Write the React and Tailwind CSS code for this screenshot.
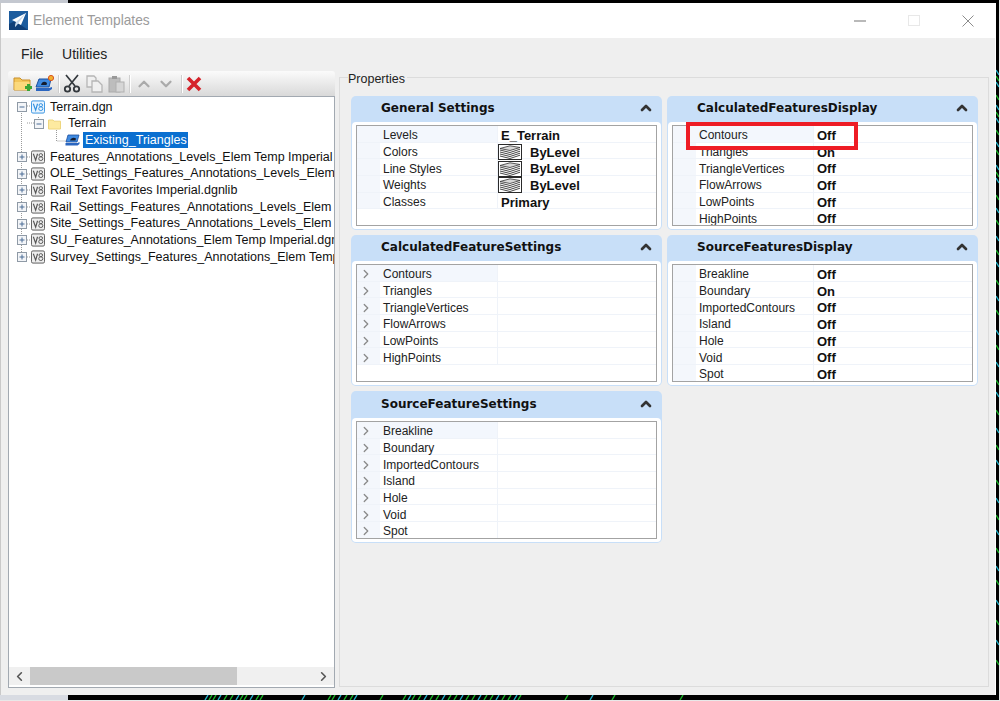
import React from 'react';
import { ChevronUp, ChevronDown, ChevronRight, ChevronLeft } from 'lucide-react';

// names as far as the pane shows them before it clips
const treeFiles = [
  'Features_Annotations_Levels_Elem Temp Imperial',
  'OLE_Settings_Features_Annotations_Levels_Elem',
  'Rail Text Favorites Imperial.dgnlib',
  'Rail_Settings_Features_Annotations_Levels_Elem T',
  'Site_Settings_Features_Annotations_Levels_Elem T',
  'SU_Features_Annotations_Elem Temp Imperial.dgnl',
  'Survey_Settings_Features_Annotations_Elem Temp',
];

const general = [
  { label: 'Levels', value: 'E_Terrain' },
  { label: 'Colors', value: 'ByLevel', swatch: true },
  { label: 'Line Styles', value: 'ByLevel', swatch: true },
  { label: 'Weights', value: 'ByLevel', swatch: true },
  { label: 'Classes', value: 'Primary' },
];
const calcDisplay = [
  { label: 'Contours', value: 'Off' },
  { label: 'Triangles', value: 'On' },
  { label: 'TriangleVertices', value: 'Off' },
  { label: 'FlowArrows', value: 'Off' },
  { label: 'LowPoints', value: 'Off' },
  { label: 'HighPoints', value: 'Off' },
];
const calcSettings = ['Contours', 'Triangles', 'TriangleVertices', 'FlowArrows', 'LowPoints', 'HighPoints'].map((label) => ({ label, arrow: true }));
const sourceDisplay = [
  { label: 'Breakline', value: 'Off' },
  { label: 'Boundary', value: 'On' },
  { label: 'ImportedContours', value: 'Off' },
  { label: 'Island', value: 'Off' },
  { label: 'Hole', value: 'Off' },
  { label: 'Void', value: 'Off' },
  { label: 'Spot', value: 'Off' },
];
const sourceSettings = ['Breakline', 'Boundary', 'ImportedContours', 'Island', 'Hole', 'Void', 'Spot'].map((label) => ({ label, arrow: true }));

function AppLogo() {
  return (
    <svg width="19" height="19" viewBox="0 0 19 19" className="shrink-0">
      <rect width="19" height="19" fill="#1c5c9e" />
      <path d="M0 19 L0 13 L6 10 L19 19Z" fill="#0f3f78" />
      <path d="M17 2 L3 9 L7 11 L6 16 L9 12.5 L12 14Z" fill="#fff" />
      <path d="M17 2 L7 11 L6 16 L9 12.5Z" fill="#c5d9ee" />
    </svg>
  );
}

function ExpandBox({ open }) {
  return (
    <svg width="10" height="10" viewBox="0 0 10 10" className="shrink-0 relative">
      <rect x="0.5" y="0.5" width="9" height="9" fill="#f3f5f8" stroke="#8f9aa6" />
      <path d={open ? 'M2.5 5H7.5' : 'M2.5 5H7.5M5 2.5V7.5'} stroke="#4a6d96" fill="none" />
    </svg>
  );
}

function V8Icon({ blue }) {
  const c = blue ? '#2f8fe0' : '#555';
  return (
    <svg width="14" height="14" viewBox="0 0 15 14" className="shrink-0 relative">
      <rect x="0.5" y="0.5" width="14" height="13" rx="1.5" fill={blue ? '#e8f4fe' : '#eee'} stroke={c} />
      <path d="M2.5 3.5 L5 10.5 L7 3.5" fill="none" stroke={c} strokeWidth="1.2" />
      <ellipse cx="10.5" cy="5" rx="1.9" ry="1.6" fill="none" stroke={c} />
      <ellipse cx="10.5" cy="8.8" rx="2.2" ry="2" fill="none" stroke={c} />
    </svg>
  );
}

function FolderSmall() {
  return (
    <svg width="13" height="12" viewBox="0 0 13 12" className="shrink-0">
      <path d="M0.5 2 H5 L6 3.2 H12.5 V11 H0.5Z" fill="#fdeaa0" stroke="#eed67e" />
    </svg>
  );
}

function SurfaceIcon() {
  return (
    <svg width="15" height="12" viewBox="0 0 15 12" className="shrink-0 relative">
      <path d="M3 1 H14 L12 8 H1Z" fill="#3f8ae0" stroke="#1d4f9e" strokeWidth="0.8" />
      <path d="M5 6.5 C6 3.5 9 3 11 4.5 L10.5 6.5Z" fill="#141c2e" />
      <path d="M0.5 9 H12.5 L14.5 8 V10 L12.5 11.5 H0.5Z" fill="#2b66c0" />
    </svg>
  );
}

function LevelSwatch() {
  return (
    <svg width="24" height="16" viewBox="0 0 24 16" className="shrink-0">
      <rect x="0.5" y="0.5" width="23" height="15" fill="#fff" stroke="#2a2a2a" />
      <path d="M2 4.5 L12 1.8 L22 3.5 L12 6.5Z" fill="#d8d8d8" stroke="#333" strokeWidth="0.8" />
      <path d="M2 6 L12 8.5 L22 5.2M2 8 L12 10.5 L22 7.2M2 10 L12 12.5 L22 9.2M2 12 L12 14.5 L22 11.2" fill="none" stroke="#333" strokeWidth="0.9" />
    </svg>
  );
}

function ToolbarSep({ className }) {
  return <span className={`h-[18px] w-[2px] bg-[#cfcfcf] border-r border-white ${className}`} />;
}

function ToolbarIcons() {
  return (
    <div className="flex items-center h-full pl-[5px]">
      <svg width="20" height="18" viewBox="0 0 20 18" className="shrink-0">
        <path d="M1 3 H7 L9 5 H17 V15 H1Z" fill="#f3c65a" stroke="#c98f2a" />
        <rect x="1.5" y="7" width="15" height="8" fill="#fbd97c" />
        <path d="M12 12.5 H19M15.5 9 V16" stroke="#3aa535" strokeWidth="3" />
      </svg>
      <div className="ml-[2px]">
        <svg width="20" height="17" viewBox="0 0 20 17" className="shrink-0">
          <path d="M4 4 H16 L14 12 H1Z" fill="#3f8ae0" stroke="#1d4f9e" />
          <path d="M6 10 C7 6 10 6 12 8 L11.5 10Z" fill="#141c2e" />
          <path d="M1 13 H14 L17 12 V14 L14 16 H1Z" fill="#2b66c0" />
          <circle cx="16" cy="3" r="2.6" fill="#f0b030" stroke="#d9541e" />
        </svg>
      </div>
      <ToolbarSep className="ml-[3px]" />
      <svg width="18" height="19" viewBox="0 0 18 19" className="shrink-0 ml-[3px]" fill="none" stroke="#33383d">
        <path d="M3 1 L12 12M15 1 L6 12" strokeWidth="1.7" />
        <circle cx="4.5" cy="15" r="2.7" strokeWidth="1.8" />
        <circle cx="13.5" cy="15" r="2.7" strokeWidth="1.8" />
      </svg>
      <svg width="17" height="18" viewBox="0 0 17 18" className="shrink-0 ml-[5px]" fill="#f0f0f0" stroke="#b5b5b5" strokeWidth="1.3">
        <path d="M1 1 H8 L10 3 V12 H1Z" />
        <path d="M6 6 H12 L16 10 V17 H6Z" />
      </svg>
      <svg width="17" height="18" viewBox="0 0 17 18" className="shrink-0 ml-[5px]">
        <rect x="1" y="3" width="11" height="14" fill="#bdbdbd" stroke="#aaa" />
        <rect x="4" y="1" width="5" height="3" fill="#999" />
        <rect x="8" y="7" width="8" height="10" fill="#d6d6d6" stroke="#b0b0b0" />
      </svg>
      <ToolbarSep className="ml-[4px]" />
      <ChevronUp size={18} strokeWidth={3} className="text-[#aaa] ml-[4px] shrink-0" />
      <ChevronDown size={18} strokeWidth={3} className="text-[#aaa] ml-[4px] shrink-0" />
      <ToolbarSep className="ml-[6px]" />
      <svg width="16" height="16" viewBox="0 0 16 16" className="shrink-0 ml-[3px]">
        <path d="M2 2 L14 14M14 2 L2 14" stroke="#d5222a" strokeWidth="3.6" />
      </svg>
    </div>
  );
}

function TreeRow({ className = '', children }) {
  return <div className={`relative flex items-center h-[16.7px] whitespace-nowrap ${className}`}>{children}</div>;
}

function Tree() {
  return (
    <div className="relative flex-1 overflow-hidden pt-[1.5px] text-[12.5px] leading-none text-[#111] font-['Liberation_Sans',sans-serif]">
      {/* dotted connector lines */}
      <svg width="90" height="180" className="absolute left-0 top-0" fill="none" stroke="#9a9a9a" strokeDasharray="1 1">
        <path d="M12.5 10 V162" />
        <path d="M29.5 20 V26" />
        <path d="M47.5 33 V44 H58" />
        <path d="M18 26 H28" />
        <path d="M18 9 H24" />
        <path d="M18 60 H24M18 77 H24M18 93 H24M18 110 H24M18 127 H24M18 143 H24M18 160 H24" />
      </svg>
      <TreeRow className="pl-[8px]">
        <ExpandBox open />
        <span className="ml-[4px]"><V8Icon blue /></span>
        <span className="ml-[5px]">Terrain.dgn</span>
      </TreeRow>
      <TreeRow className="pl-[25px]">
        <ExpandBox open />
        <span className="ml-[4px] relative"><FolderSmall /></span>
        <span className="ml-[7px]">Terrain</span>
      </TreeRow>
      <TreeRow className="pl-[56px]">
        <SurfaceIcon />
        <span className="ml-[3px] h-[16px] w-[105px] pl-[2px] flex items-center bg-[#0a6fd0] text-white">Existing_Triangles</span>
      </TreeRow>
      {treeFiles.map((name) => (
        <TreeRow key={name} className="pl-[8px]">
          <ExpandBox />
          <span className="ml-[4px]"><V8Icon /></span>
          <span className="ml-[5px]">{name}</span>
        </TreeRow>
      ))}
    </div>
  );
}

function PropRow({ row, first }) {
  return (
    <div className="flex h-[16.7px] border-b border-[#eff3f9] text-[12px] leading-none font-['Liberation_Sans',sans-serif]">
      <div className="w-[23px] shrink-0 bg-[#f4f7fc] flex items-center pt-[3px] pl-[2px]">
        {row.arrow && <ChevronRight size={14} strokeWidth={2.2} className="text-[#8a8a8a]" />}
      </div>
      <div className={`w-[117px] shrink-0 pl-[3px] pt-[3px] flex items-center text-[#222] ${first ? 'bg-[#f3f7fd]' : 'bg-white'}`}>
        {row.label}
      </div>
      <div className="flex-1 border-l border-[#eff3f9] flex items-center pl-[3px] pt-[3px] text-[13px] font-bold text-[#111]">
        {row.swatch ? (
          <>
            <span className="-ml-[3px]"><LevelSwatch /></span>
            <span className="ml-[8px]">{row.value}</span>
          </>
        ) : (
          row.value
        )}
      </div>
    </div>
  );
}

function Panel({ title, rows, boxHeight, headerHeight = 'h-[25px]' }) {
  return (
    <section className="rounded-[5px] bg-[#c8dff8] p-[1px]">
      <header className={`flex items-center justify-between pb-[3px] pl-[29px] pr-[7px] ${headerHeight}`}>
        <h3 className="text-[12px] font-bold text-[#111] font-['DejaVu_Sans',sans-serif]">{title}</h3>
        <ChevronUp size={16} strokeWidth={4} className="text-[#333]" />
      </header>
      <div className="rounded-[4px] bg-white px-[4px] py-[3px]">
        <div className={`border border-[#a3a3a3] overflow-hidden ${boxHeight}`}>
          {rows.map((row, i) => (
            <PropRow key={row.label} row={row} first={i === 0 && title !== 'SourceFeaturesDisplay'} />
          ))}
        </div>
      </div>
    </section>
  );
}

function Backdrop() {
  // desktop drawing peeking out behind the window
  const bottom = [205, 209, 213, 218, 224, 230, 236, 240, 244, 250, 256, 260, 302, 328, 332, 338, 344, 350, 354, 380, 403, 408, 412, 418, 424, 430, 436, 442, 448, 454, 460, 466, 472, 478, 484, 490, 496, 502, 508, 514, 518, 565, 590, 612, 680];
  const side = [70, 76, 82, 95, 105, 112, 118, 130, 142, 150, 165, 172, 178, 195, 208, 220, 236, 250, 262, 280, 296, 310, 330, 345, 362, 380, 392, 410, 428, 445, 460, 480, 498, 515, 530, 548, 566, 580, 600, 620, 640, 660];
  return (
    <svg width="1000" height="701" className="absolute inset-0" fill="none" strokeWidth="1.4">
      {bottom.map((x, i) => (
        <path key={x} d={`M${x} 700 L${x + 3} 695`} stroke={i % 3 === 0 ? '#22b5cc' : '#18b828'} />
      ))}
      {side.map((y, i) => (
        <path key={y} d={`M996 ${y} L999 ${y + 5}`} stroke={i % 2 === 0 ? '#22b5cc' : '#18b828'} />
      ))}
    </svg>
  );
}

export default function App() {
  return (
    <div className="relative w-[1000px] h-[701px] overflow-hidden bg-black font-['Liberation_Sans',sans-serif]">
      <Backdrop />
      <div className="absolute left-0 top-0 w-[68px] h-[3px] bg-[#c4c8d0]" />
      <div className="absolute left-0 bottom-0 w-[68px] h-[6px] bg-[#d8dbe2]" />
      <div className="absolute left-[999px] top-0 w-[1px] h-[701px] bg-[#e8e8e8]" />
      <div className="absolute left-0 top-[700px] w-[1000px] h-[1px] bg-[#e8e8e8]" />

      {/* window */}
      <div className="absolute left-0 top-[3px] w-[996px] h-[692px] flex flex-col bg-white border-l border-[#c9c9c9] border-r border-r-white">
        <div className="flex items-center h-[35px] pl-[8px] shrink-0">
          <AppLogo />
          <span className="ml-[5px] pt-[2px] text-[13.75px] text-[#9b9b9b]">Element Templates</span>
          <div className="ml-auto flex items-center">
            <span className="w-[12px] h-[2px] bg-[#b9b9b9]" />
            <span className="ml-[42px] w-[12px] h-[11px] border border-[#e8e8e8]" />
            <svg width="12" height="12" viewBox="0 0 12 12" className="ml-[42px] mr-[21px]">
              <path d="M0.5 0.5 L11.5 11.5M11.5 0.5 L0.5 11.5" stroke="#8c8c8c" />
            </svg>
          </div>
        </div>

        <div className="flex-1 flex flex-col bg-[#efefef]">
          <div className="flex items-center h-[33px] pl-[20px] gap-[18.5px] text-[14px] text-[#222] shrink-0">
            <span>File</span>
            <span>Utilities</span>
          </div>

          <div className="flex pl-[7px] pr-[6px] gap-[4px] h-[617px]">
            {/* left pane */}
            <div className="w-[327px] shrink-0 flex flex-col">
              <div className="h-[25px] shrink-0 rounded-t-[3px] bg-gradient-to-b from-[#fbfbfb] to-[#d9d9d9]">
                <ToolbarIcons />
              </div>
              <div className="flex-1 flex flex-col border border-[#a2a9b1] bg-white">
                <Tree />
                <div className="flex items-center h-[18px] shrink-0 bg-[#f0f0f0] mb-[2px]">
                  <div className="w-[21px] flex justify-center">
                    <ChevronLeft size={15} strokeWidth={2.6} className="text-[#555]" />
                  </div>
                  <div className="w-[207px] h-full bg-[#c9c9c9]" />
                  <div className="ml-auto w-[21px] flex justify-center">
                    <ChevronRight size={15} strokeWidth={2.6} className="text-[#555]" />
                  </div>
                </div>
              </div>
            </div>

            {/* properties group */}
            <div className="relative flex-1 mt-[6px] h-[610px] border border-[#dcdcdc] pt-[18px] pl-[11px]">
              <span className="absolute left-[8px] -top-[7px] bg-[#efefef] pr-[2px] text-[12.5px] leading-[16px] text-[#222]">
                Properties
              </span>
              <div className="grid grid-cols-[311px_311px] gap-x-[5px] gap-y-[5px] items-start">
                <Panel title="General Settings" rows={general} boxHeight="h-[101px]" />
                <Panel title="CalculatedFeaturesDisplay" rows={calcDisplay} boxHeight="h-[101px]" />
                <Panel title="CalculatedFeatureSettings" rows={calcSettings} boxHeight="h-[118px]" />
                <Panel title="SourceFeaturesDisplay" rows={sourceDisplay} boxHeight="h-[118px]" />
                <Panel title="SourceFeatureSettings" rows={sourceSettings} boxHeight="h-[118px]" headerHeight="h-[26px]" />
              </div>
            </div>
          </div>
        </div>
      </div>

      {/* annotation drawn over the screenshot */}
      <div className="absolute left-[686px] top-[122px] w-[172px] h-[28px] border-[4px] border-[#ee1c25]" />
    </div>
  );
}
